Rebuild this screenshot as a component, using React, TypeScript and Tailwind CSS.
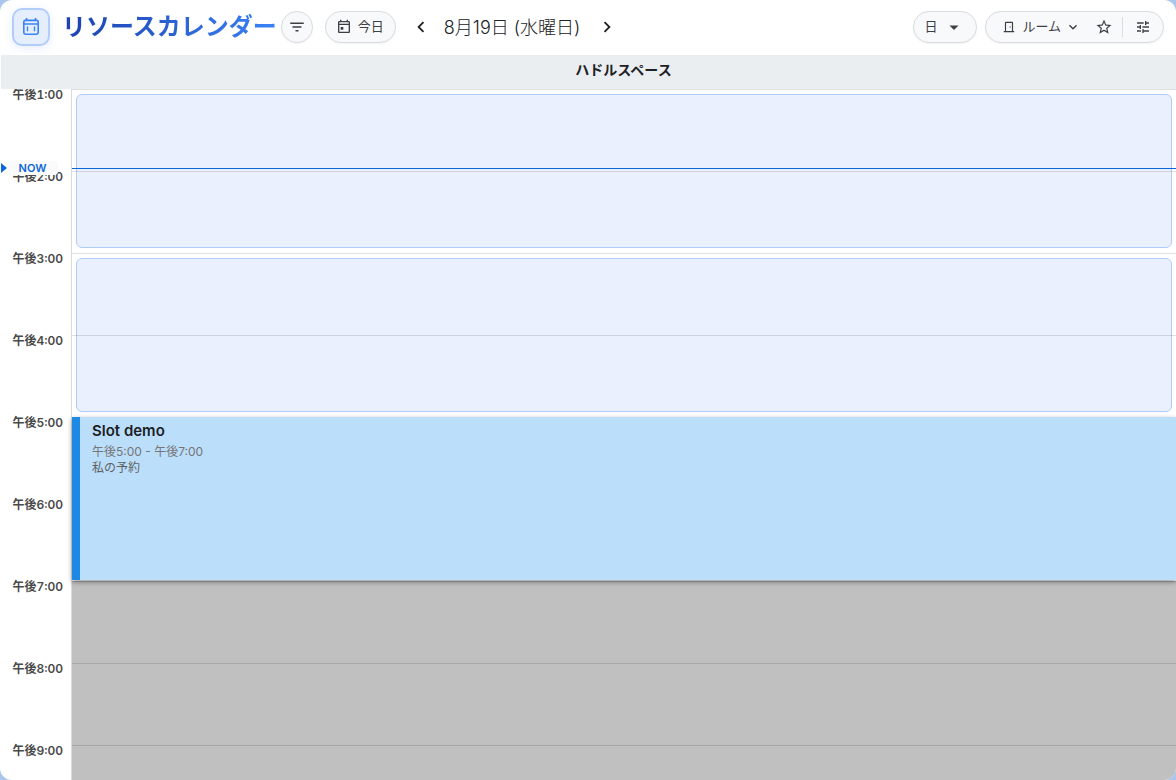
import React from 'react';
import { MdFilterList, MdOutlineDoorFront, MdStarOutline, MdTune } from 'react-icons/md';

const HOURS = ['午後1:00', '午後2:00', '午後3:00', '午後4:00', '午後5:00', '午後6:00', '午後7:00', '午後8:00', '午後9:00'];

const pill = 'flex h-8 items-center rounded-full border border-[#dadce0] bg-[#f8f9fb] text-[13px] text-[#3c4043] shadow-xs';

function LogoIcon() {
  return (
    <svg viewBox="0 0 16 18" className="h-[18px] w-4" fill="none" stroke="#3b82f6" strokeWidth="1.6" aria-hidden="true">
      <rect x="0.8" y="2.4" width="14.4" height="13.8" rx="1.6" />
      <path d="M0.8 6h14.4M3.5 0v3M12.5 0v3" />
      <path d="M4.5 8.4v4.8M11.5 8.4v4.8" strokeWidth="1.4" />
    </svg>
  );
}

function TodayIcon() {
  return (
    <svg viewBox="0 0 24 24" className="size-4" fill="currentColor" aria-hidden="true">
      <path d="M7 12h4v4H7v-4m12-9h-1V1h-2v2H8V1H6v2H5c-1.11 0-2 .9-2 2v14c0 1.1.89 2 2 2h14c1.1 0 2-.9 2-2V5c0-1.1-.9-2-2-2m0 2v2H5V5h14M5 19V9h14v10H5z" />
    </svg>
  );
}

function Chevron({ d, className }: { d: string; className: string }) {
  return (
    <svg viewBox="0 0 24 24" className={className} fill="currentColor" aria-hidden="true">
      <path d={d} />
    </svg>
  );
}

function Toolbar() {
  return (
    <header className="flex h-[55px] shrink-0 items-center justify-between px-3 pb-px">
      <div className="flex items-center">
        <div className="flex size-[38px] items-center justify-center rounded-[10px] border-2 border-[#b3cdfb] bg-[#e5eefe] shadow-[0_2px_8px_rgba(59,130,246,0.14)]">
          <LogoIcon />
        </div>
        <h1 className="ml-3 bg-linear-to-r from-[#1e40af] to-[#3b82f6] bg-clip-text text-2xl leading-8 font-bold whitespace-nowrap text-transparent">
          リソースカレンダー
        </h1>
        <button type="button" aria-label="フィルター" className={`${pill} ml-1 w-8 justify-center`}>
          <MdFilterList className="size-[18px]" />
        </button>
        <button type="button" className={`${pill} ml-3 gap-1.5 pr-[11px] pl-2.5`}>
          <TodayIcon />
          今日
        </button>
        <button type="button" aria-label="前の日" className="ml-3.5 text-[#202124]">
          <Chevron className="size-[22px]" d="M15.41 16.58 10.83 12l4.58-4.59L14 6l-6 6 6 6 1.41-1.42z" />
        </button>
        <span className="mr-4 ml-3 pt-px text-lg font-light whitespace-nowrap text-[#202124]">8月19日 (水曜日)</span>
        <button type="button" aria-label="次の日" className="text-[#202124]">
          <Chevron className="size-[22px]" d="M8.59 16.58 13.17 12 8.59 7.41 10 6l6 6-6 6-1.41-1.42z" />
        </button>
      </div>
      <div className="flex items-center gap-2">
        <button type="button" className={`${pill} w-16 gap-2 pl-2.5`}>
          日
          <Chevron className="size-[18px]" d="M6 10l6 6 6-6z" />
        </button>
        <div className={`${pill} pr-3 pl-4`}>
          <button type="button" className="flex items-center">
            <MdOutlineDoorFront className="size-3.5" />
            <span className="ml-1.5">ルーム</span>
            <Chevron className="ml-1 size-4" d="M7.41 8.58 12 13.17l4.59-4.59L18 10l-6 6-6-6 1.41-1.42z" />
          </button>
          <button type="button" aria-label="お気に入り" className="ml-3.5">
            <MdStarOutline className="size-[18px]" />
          </button>
          <span className="mr-2.5 ml-[9px] h-5 w-px bg-[#dadce0]" />
          <button type="button" aria-label="設定" className="ml-0.5">
            <MdTune className="size-4" />
          </button>
        </div>
      </div>
    </header>
  );
}

function Slot({ top }: { top: string }) {
  return <div className={`absolute right-1 left-1 h-[154px] rounded-md border border-[#aecbfa] bg-[#eaf0fd] ${top}`} />;
}

export default function App() {
  return (
    <div className="h-screen bg-[#a9c7ee] font-[Inter,'Noto_Sans_CJK_JP',sans-serif]">
      <main className="flex h-full flex-col overflow-hidden rounded-xl bg-white">
        <Toolbar />
        <div className="ml-px flex h-[34px] shrink-0 bg-[#eaeef1]">
          <div className="w-[70px] shrink-0" />
          <h2 className="flex-1 text-center text-sm leading-[30px] font-bold text-[#202124]">ハドルスペース</h2>
        </div>
        <div className="relative flex min-h-0 flex-1 overflow-hidden">
          <div className="w-[71px] shrink-0">
            {HOURS.map((hour) => (
              <div key={hour} className="h-[82px] pr-2 text-right text-xs leading-[11px] font-semibold text-[#4a4a4a] tabular-nums">
                {hour}
              </div>
            ))}
          </div>
          <div className="relative h-[738px] flex-1 border-l border-[#dadada]">
            <Slot top="top-[5px]" />
            <Slot top="top-[169px]" />
            <div className="absolute inset-x-0 top-[492px] bottom-0 bg-[#c0c0c0]" />
            {HOURS.map((hour) => (
              <div key={hour} className="relative h-[82px] border-t border-black/12" />
            ))}
            <article className="absolute inset-x-0 top-[328px] h-[163px] border-l-8 border-[#1e88e5] bg-[#bbdefb] px-3 pt-1 shadow-[0_2px_5px_rgba(0,0,0,0.4)]">
              <h3 className="text-[15px] leading-5 font-semibold text-[#1b1f23]">Slot demo</h3>
              <p className="pt-[3px] text-xs leading-4 text-[#757575]">午後5:00 - 午後7:00</p>
              <p className="text-xs leading-4 text-[#616161]">私の予約</p>
            </article>
            <div className="absolute inset-x-0 top-[79px] h-px bg-[#0b66d8]" />
          </div>
          <div className="absolute top-[72px] left-px flex h-3.5 items-center">
            <span className="h-0 w-0 border-y-[5px] border-l-[6px] border-y-transparent border-l-[#0b66d8]" />
            <span className="w-[51px] rounded-sm bg-[#fafafa] text-center text-[11px] leading-[14px] font-semibold text-[#0b66d8]">NOW</span>
          </div>
        </div>
      </main>
    </div>
  );
}
